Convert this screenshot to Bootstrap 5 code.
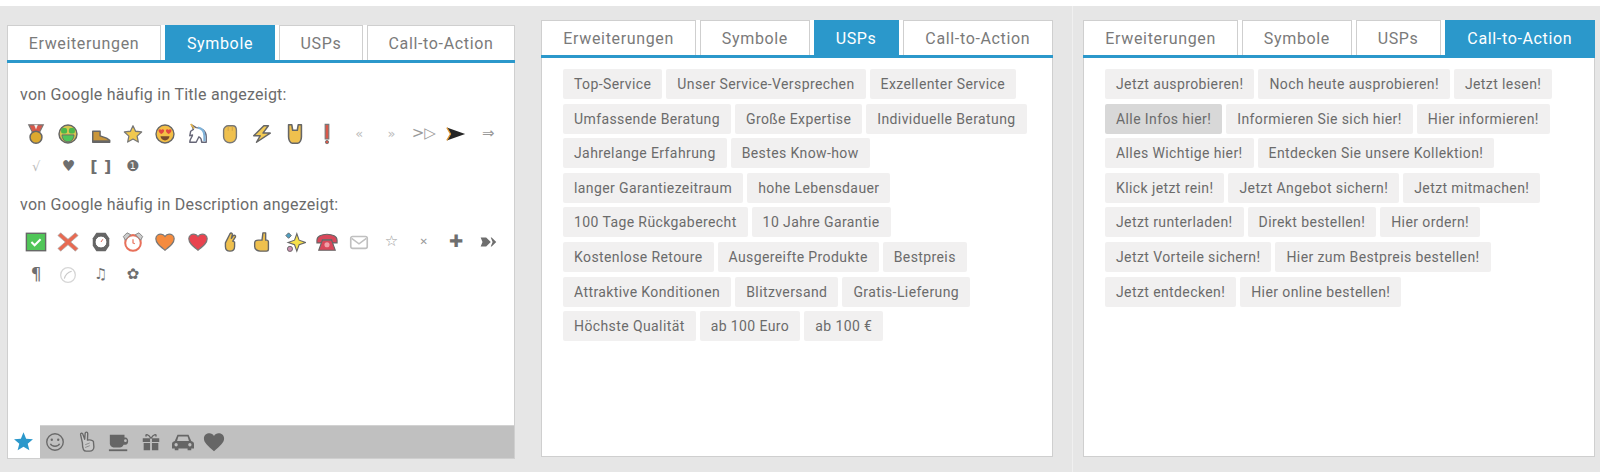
<!DOCTYPE html>
<html lang="de"><head><meta charset="utf-8"><title>Snippet</title>
<link rel="stylesheet" href="https://cdn.jsdelivr.net/npm/bootstrap@5.3.0/dist/css/bootstrap.min.css">
<style>
html,body{height:472px;overflow:hidden;background:#fff}
body{padding-top:6px;font-family:Roboto,"Liberation Sans",sans-serif;color:#6b6b6b}
.stage{height:466px;background:#e6e6e6}
.pnl{background:#fff;border:1px solid #cfcfcf;border-top:0;display:flex;flex-direction:column}
.pnl-a{width:508px;height:434px;margin:19px 0 0 7px}
.pnl-b{width:512px;height:437px;margin:14px 0 0 26px}
.side{height:466px;margin-left:19px;padding:14px 0 0 10px;border-left:1px solid #f0f0f0}
.pnl-c{width:512px;height:437px}
.pnl .nav-tabs{display:grid;grid-template-columns:155fr 109fr 85fr 150fr;gap:4px;height:38px;margin:0 -1px;border-bottom:3px solid #2b98cb;--bs-nav-tabs-border-width:0}
.pnl-a .nav-tabs{grid-template-columns:154fr 110fr 84fr 148fr}
.pnl .nav-link{height:35px;padding:0;margin:0;border:1px solid #cfcfcf;border-bottom:0;border-radius:0;background:#fff;color:#7a7a7a;font-size:16px;letter-spacing:.65px;line-height:35px;text-align:center;white-space:nowrap}
.pnl .nav-link.active{background:#2b98cb;border-color:#2b98cb;color:#fff}
.chips{display:flex;flex-wrap:wrap;gap:4.6px 4px;padding:11px 20px 0 21px;align-content:flex-start}
.chipx{height:30px;padding:0 11px;background:#f1f0f0;border-radius:2px;color:#6b6b6b;font-size:14px;letter-spacing:.4px;line-height:30px;white-space:nowrap}
.chipx.on{background:#d8d8d8}
.body-a{flex:1 1 auto;padding:20px 0 0 12px}
.hd{font-size:16px;letter-spacing:.25px;line-height:24px;color:#6b6b6b;margin:0}
.hd2{margin-top:10px}
.icons{display:flex;flex-wrap:wrap;margin-top:10px}
.hd2 + .icons{margin-top:8px}
.cellx{width:32.3px;height:33px;display:flex;align-items:center;justify-content:center;line-height:1}
.cellx svg{width:22px;height:22px}
.gl{font-family:"DejaVu Sans",sans-serif;color:#777}
.g-l{color:#bcbcbc;font-size:13px}
.g-m{color:#9a9a9a;font-size:15px}
.g-d{color:#6e6e6e;font-size:15px}
.g-br{font-size:16px;font-weight:700;white-space:nowrap;word-spacing:1px}
.g-pi{font-size:17px}
.g-x{color:#999;font-size:10px}
.dock{height:33px;flex:none;background:#c0c0c0;border-top:1px solid #d2d2d2;display:flex;align-items:center}
.dock-on{width:32px;height:33px;margin:-1px -1px 0 0;padding-right:1px;background:#fff;display:flex;align-items:center;justify-content:center}
.dock-on svg{width:21px;height:21px}
.dock-i{width:31.9px;display:flex;justify-content:center}
.dock-i svg{width:22px;height:22px}
</style></head><body>
<div class="stage d-flex align-items-start">

<section class="pnl pnl-a">
<ul class="nav nav-tabs"><li class="nav-item"><a class="nav-link" href="#">Erweiterungen</a></li><li class="nav-item"><a class="nav-link active" href="#">Symbole</a></li><li class="nav-item"><a class="nav-link" href="#">USPs</a></li><li class="nav-item"><a class="nav-link" href="#">Call-to-Action</a></li></ul>
<div class="body-a">
<p class="hd">von Google häufig in Title angezeigt:</p>
<div class="icons">
<span class="cellx"><svg viewBox="0 0 24 24"><path d="M4 2h16l-5 10H9z" fill="#d9584a" stroke="#777" stroke-width="1.200"/><path d="M10 2l2 5 2-5z" fill="#eee"/><circle cx="12" cy="15.500" r="6.500" fill="#dca92f" stroke="#666" stroke-width="1.600"/></svg></span>
<span class="cellx"><svg viewBox="0 0 24 24"><circle cx="12" cy="12" r="9.800" fill="#d6c650" stroke="#666" stroke-width="1.600"/><rect x="4.500" y="5.500" width="6.500" height="6" rx="2" fill="#4bb84a"/><rect x="13" y="5.500" width="6.500" height="6" rx="2" fill="#4bb84a"/><path d="M5.500 13h13c0 4.500-3 7.500-6.500 7.500s-6.500-3-6.500-7.500z" fill="#4fc659" stroke="#666"/></svg></span>
<span class="cellx"><svg viewBox="0 0 24 24"><path d="M3 9h8v5l7 2.500 3.500 2.500v2H3z" fill="#c9963a" stroke="#666" stroke-width="1.600" stroke-linejoin="round"/><path d="M3 20h18.500" stroke="#666" stroke-width="2.200"/></svg></span>
<span class="cellx"><svg viewBox="0 0 24 24"><path d="M12 3l2.800 6 6.600.8-4.900 4.500 1.300 6.500L12 17.500 6.200 20.800l1.300-6.500L2.600 9.800 9.200 9z" fill="#f2c94f" stroke="#777" stroke-width="1.400" stroke-linejoin="round"/></svg></span>
<span class="cellx"><svg viewBox="0 0 24 24"><circle cx="12" cy="12" r="9.800" fill="#f4bf46" stroke="#666" stroke-width="1.500"/><path d="M8 7.500c1-1.200 3-.8 3 1 0 1.500-2 2.800-3 3.500-1-.7-3-2-3-3.500 0-1.800 2-2.200 3-1zM16 7.500c1-1.200 3-.8 3 1 0 1.500-2 2.800-3 3.500-1-.7-3-2-3-3.500 0-1.800 2-2.200 3-1z" fill="#e2483f"/><path d="M7 14.500h10c-.5 3-2.500 4.500-5 4.500s-4.500-1.500-5-4.500z" fill="#7a4a2c"/></svg></span>
<span class="cellx"><svg viewBox="0 0 24 24"><path d="M3 21c0-4 3-6 3-8l-3 1 1-5 3-2-2-5 5 3c6 0 11 4 11 10v6h-5c0-3-1-5-3-6l-3 6z" fill="#fff" stroke="#667" stroke-width="1.500" stroke-linejoin="round"/><path d="M12 5c5 1 7 5 7 9v6" fill="none" stroke="#7fb2d9" stroke-width="2.400"/><path d="M4 1l4 5" stroke="#e3b54c" stroke-width="1.800"/></svg></span>
<span class="cellx"><svg viewBox="0 0 24 24"><path d="M5 8c0-3 3-5 5-5h5c2.500 0 4 2 4 5v7c0 3.500-3 6.500-7 6.500S5 18.500 5 15z" fill="#efc04e" stroke="#777" stroke-width="1.500"/><path d="M10 3.500v5M14.500 3.500v5" stroke="#c9a04a"/></svg></span>
<span class="cellx"><svg viewBox="0 0 24 24"><path d="M14 3L3 14h7l-4 7 15-10h-8l6-8z" fill="#f3cb56" stroke="#666" stroke-width="1.600" stroke-linejoin="round"/></svg></span>
<span class="cellx"><svg viewBox="0 0 24 24"><path d="M5 2h3.500l1 6h5l1-6H19v13c0 3-1.500 7-4 7H9c-2.500 0-4-4-4-7z" fill="#efc04e" stroke="#666" stroke-width="1.700" stroke-linejoin="round"/></svg></span>
<span class="cellx"><svg viewBox="0 0 24 24"><path d="M10 1.500h4v16h-4z" fill="#d9584a" stroke="#777" stroke-width="1.200"/><circle cx="12" cy="20.800" r="1.800" fill="#d9584a" stroke="#777"/></svg></span>
<span class="cellx gl g-l">«</span><span class="cellx gl g-l">»</span><span class="cellx gl g-m">&gt;▷</span>
<span class="cellx"><svg viewBox="0 0 24 24"><path d="M2 5l20 7-20 7 4-7z" fill="#252525"/><path d="M2 5l4 7-4 7" fill="none" stroke="#e39a35" stroke-width="1.400"/></svg></span>
<span class="cellx gl g-m">⇒</span>
<span class="cellx gl g-l">√</span><span class="cellx gl g-d">♥</span><span class="cellx gl g-d g-br">[ ]</span><span class="cellx gl g-d">❶</span>
</div>
<p class="hd hd2">von Google häufig in Description angezeigt:</p>
<div class="icons">
<span class="cellx"><svg viewBox="0 0 24 24"><rect x="1.500" y="2.500" width="21" height="19" fill="#50c658" stroke="#666" stroke-width="1.500"/><path d="M7 12l3.500 3.500L17 9" fill="none" stroke="#fff" stroke-width="2.200"/></svg></span>
<span class="cellx"><svg viewBox="0 0 24 24"><path d="M4 2l8 7 8-7 3 3-8 7 8 7-3 3-8-7-8 7-3-3 8-7-8-7z" fill="#e86a52" stroke="#aaa" stroke-width=".8"/></svg></span>
<span class="cellx"><svg viewBox="0 0 24 24"><path d="M7 2h10l4 6v8l-4 6H7l-4-6V8z" fill="#666"/><circle cx="12" cy="12" r="6.500" fill="#fff" stroke="#555"/><path d="M12 12l2-3" stroke="#d9584a"/></svg></span>
<span class="cellx"><svg viewBox="0 0 24 24"><circle cx="12" cy="13" r="8.500" fill="#fff" stroke="#e8705a" stroke-width="2.200"/><path d="M1.500 6l4-4 4 2-6 6zM22.500 6l-4-4-4 2 6 6z" fill="#ccc" stroke="#777" stroke-width=".9"/><path d="M12 9v4l2 1" fill="none" stroke="#e8705a" stroke-width="1.300"/></svg></span>
<span class="cellx"><svg viewBox="0 0 24 24"><path d="M12 21C6 16 2 13 2 8.500 2 5 5 3.500 7.500 3.500 9.500 3.500 11 4.500 12 6c1-1.500 2.500-2.500 4.500-2.500C19 3.500 22 5 22 8.500 22 13 18 16 12 21z" fill="#f58b3e" stroke="#777" stroke-width="1.300"/></svg></span>
<span class="cellx"><svg viewBox="0 0 24 24"><path d="M12 21C6 16 2 13 2 8.500 2 5 5 3.500 7.500 3.500 9.500 3.500 11 4.500 12 6c1-1.500 2.500-2.500 4.500-2.500C19 3.500 22 5 22 8.500 22 13 18 16 12 21z" fill="#e9434f" stroke="#777" stroke-width="1.300"/></svg></span>
<span class="cellx"><svg viewBox="0 0 24 24"><path d="M7 13l5-10c1-1.500 3-.5 2.500 1l-1 4 2-3c1-1 3 0 2.500 1.500L15 11l2 1v5c0 3-2 5-5 5s-5-2-5-5z" fill="#efc04e" stroke="#666" stroke-width="1.500" stroke-linejoin="round"/></svg></span>
<span class="cellx"><svg viewBox="0 0 24 24"><path d="M13 2h3v8h1c1.500 0 2 1 2 2v8c0 1-1 2-2 2h-7c-3 0-6-2-6-5v-4c0-2 1.500-3 4-3h4z" fill="#efc04e" stroke="#666" stroke-width="1.500" stroke-linejoin="round"/></svg></span>
<span class="cellx"><svg viewBox="0 0 24 24"><path d="M14 3l2.500 7 7 2.500-7 2.500-2.500 7-2.500-7-7-2.500 7-2.500z" fill="#f7e04a" stroke="#666" stroke-width="1.200"/><path d="M5 2l3 3-3 3-3-3z" fill="#4f9fc2" stroke="#666"/><circle cx="6.500" cy="19.500" r="2.800" fill="#cc8fb0" stroke="#666"/></svg></span>
<span class="cellx"><svg viewBox="0 0 24 24"><path d="M1 10c0-4 5-6.500 11-6.500S23 6 23 10v3h-6V9.500H7V13H1z" fill="#d9475a" stroke="#666" stroke-width="1.200"/><path d="M7 10h10l4 11H3z" fill="#d9475a" stroke="#666" stroke-width="1.200"/><circle cx="12" cy="15" r="2.800" fill="#f0a0a8"/></svg></span>
<span class="cellx"><svg viewBox="0 0 24 24"><rect x="3" y="6" width="18" height="13" rx="2" fill="#fff" stroke="#c0c0c0" stroke-width="1.800"/><path d="M4 8l8 6 8-6" fill="none" stroke="#c0c0c0" stroke-width="1.600"/></svg></span>
<span class="cellx gl g-m">☆</span><span class="cellx gl g-x">✕</span><span class="cellx gl g-d g-pi">✚</span>
<span class="cellx"><svg viewBox="0 0 24 24"><path d="M4 7h6l5 5-5 5H4l2-5zM15 7h1l5 5-5 5h-1l2-5z" fill="#6e6e6e"/></svg></span>
<span class="cellx gl g-d g-pi">¶</span>
<span class="cellx"><svg viewBox="0 0 24 24"><circle cx="12" cy="12" r="8" fill="none" stroke="#d6d6d6" stroke-width="1.400"/><path d="M8 16c1-4 4-7 8-8" fill="none" stroke="#c8c8c8" stroke-width="1.200"/></svg></span>
<span class="cellx gl g-d">♫</span><span class="cellx gl g-d">✿</span>
</div>
</div>
<div class="dock">
<span class="dock-on"><svg viewBox="0 0 24 24"><path d="M12 1.500l3 7.300 7.800.6-6 5.100 1.900 7.600L12 18l-6.700 4.100 1.900-7.600-6-5.100L9 8.800z" fill="#2b98cb"/></svg></span>
<span class="dock-i"><svg viewBox="0 0 24 24"><circle cx="12" cy="12" r="9" fill="none" stroke="#6a6a6a" stroke-width="1.500"/><circle cx="8.500" cy="9.500" r="1.300" fill="#6a6a6a"/><circle cx="15.500" cy="9.500" r="1.300" fill="#6a6a6a"/><path d="M7 14c1.500 3.500 8.500 3.500 10 0" fill="none" stroke="#6a6a6a" stroke-width="1.500"/></svg></span>
<span class="dock-i"><svg viewBox="0 0 24 24"><path d="M7 13L5 4c-.3-1.800 2-2.200 2.500-.5L9.500 9 10 2.500c.2-1.800 2.800-1.600 2.800.2l-.3 7.300c2-.5 6-.3 6.500 1.500l.5 6c0 2.500-2 4.500-4.500 4.500H11c-2 0-4-3-4-9z" fill="#c8c8c8" stroke="#6a6a6a" stroke-width="1.500" stroke-linejoin="round"/><path d="M10 15l5-2M10 18l5-2" stroke="#888"/></svg></span>
<span class="dock-i"><svg viewBox="0 0 24 24"><path d="M2 4h16v3h1c4 0 4 8 0 8h-2c-1 2-2 3-4 3H6c-2 0-4-2-4-4z" fill="#666"/><circle cx="19" cy="10.500" r="1.500" fill="#c0c0c0"/><path d="M1 21h20" stroke="#666" stroke-width="2"/></svg></span>
<span class="dock-i"><svg viewBox="0 0 24 24"><path d="M3 8h8v4H3zM13 8h8v4h-8zM4 13h7v8H4zM13 13h7v8h-7z" fill="#666"/><path d="M12 8C9 3 5 3 7 6M12 8c3-5 7-5 5-2" fill="none" stroke="#666" stroke-width="1.500"/></svg></span>
<span class="dock-i"><svg viewBox="0 0 24 24"><path d="M6 4h12l3 7c1.500 .5 3 1.500 3 3v5h-3v2h-4v-2H7v2H3v-2H0v-5c0-1.500 1.500-2.500 3-3z" fill="#666"/><path d="M7 6h10l1.500 5h-13z" fill="#c0c0c0"/><circle cx="4.500" cy="15" r="1.800" fill="#c0c0c0"/><circle cx="19.500" cy="15" r="1.800" fill="#c0c0c0"/></svg></span>
<span class="dock-i"><svg viewBox="0 0 24 24"><path d="M12 22C5 16 1 13 1 8 1 4.500 4 2.500 7 2.500c2 0 4 1 5 3 1-2 3-3 5-3 3 0 6 2 6 5.500 0 5-4 8-11 14z" fill="#666"/></svg></span>
</div>
</section>

<section class="pnl pnl-b">
<ul class="nav nav-tabs"><li class="nav-item"><a class="nav-link" href="#">Erweiterungen</a></li><li class="nav-item"><a class="nav-link" href="#">Symbole</a></li><li class="nav-item"><a class="nav-link active" href="#">USPs</a></li><li class="nav-item"><a class="nav-link" href="#">Call-to-Action</a></li></ul>
<div class="chips">
<span class="chipx">Top-Service</span><span class="chipx">Unser Service-Versprechen</span><span class="chipx">Exzellenter Service</span><span class="chipx">Umfassende Beratung</span><span class="chipx">Große Expertise</span><span class="chipx">Individuelle Beratung</span><span class="chipx">Jahrelange Erfahrung</span><span class="chipx">Bestes Know-how</span><span class="chipx">langer Garantiezeitraum</span><span class="chipx">hohe Lebensdauer</span><span class="chipx">100 Tage Rückgaberecht</span><span class="chipx">10 Jahre Garantie</span><span class="chipx">Kostenlose Retoure</span><span class="chipx">Ausgereifte Produkte</span><span class="chipx">Bestpreis</span><span class="chipx">Attraktive Konditionen</span><span class="chipx">Blitzversand</span><span class="chipx">Gratis-Lieferung</span><span class="chipx">Höchste Qualität</span><span class="chipx">ab 100 Euro</span><span class="chipx">ab 100 €</span>
</div>
</section>

<div class="side">
<section class="pnl pnl-c">
<ul class="nav nav-tabs"><li class="nav-item"><a class="nav-link" href="#">Erweiterungen</a></li><li class="nav-item"><a class="nav-link" href="#">Symbole</a></li><li class="nav-item"><a class="nav-link" href="#">USPs</a></li><li class="nav-item"><a class="nav-link active" href="#">Call-to-Action</a></li></ul>
<div class="chips">
<span class="chipx">Jetzt ausprobieren!</span><span class="chipx">Noch heute ausprobieren!</span><span class="chipx">Jetzt lesen!</span><span class="chipx on">Alle Infos hier!</span><span class="chipx">Informieren Sie sich hier!</span><span class="chipx">Hier informieren!</span><span class="chipx">Alles Wichtige hier!</span><span class="chipx">Entdecken Sie unsere Kollektion!</span><span class="chipx">Klick jetzt rein!</span><span class="chipx">Jetzt Angebot sichern!</span><span class="chipx">Jetzt mitmachen!</span><span class="chipx">Jetzt runterladen!</span><span class="chipx">Direkt bestellen!</span><span class="chipx">Hier ordern!</span><span class="chipx">Jetzt Vorteile sichern!</span><span class="chipx">Hier zum Bestpreis bestellen!</span><span class="chipx">Jetzt entdecken!</span><span class="chipx">Hier online bestellen!</span>
</div>
</section>
</div>
</div>
<script src="https://cdn.jsdelivr.net/npm/bootstrap@5.3.0/dist/js/bootstrap.bundle.min.js"></script>
</body></html>
